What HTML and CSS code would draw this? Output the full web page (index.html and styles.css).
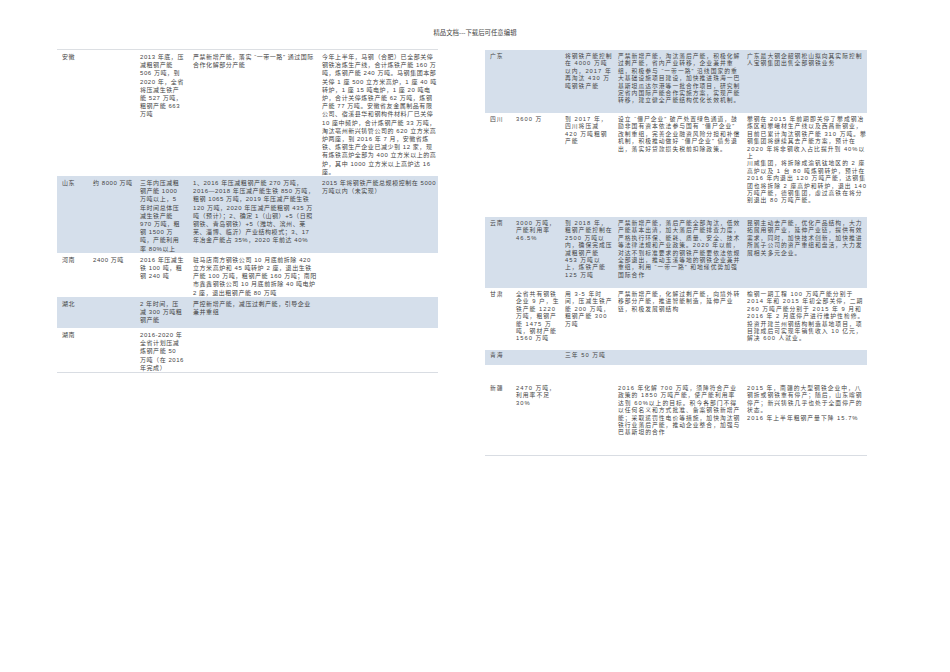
FILE: index.html
```html
<!DOCTYPE html>
<html lang="zh">
<head>
<meta charset="utf-8">
<link rel="stylesheet" href="styles.css">
</head>
<body>
<div class="page">
  <div class="header">精品文档---下载后可任意编辑</div>
  <div class="tables">
    <table class="t tl">
      <colgroup><col class="l1"><col class="l2"><col class="l3"><col class="l4"><col class="l5"></colgroup>
      <tr class="r-ah">
        <td>安徽</td>
        <td></td>
        <td class="narrow">2013 年底，压减粗钢产能 506 万吨，到 2020 年，全省将压减生铁产能 527 万吨，粗钢产能 663 万吨</td>
        <td>严禁新增产能，落实 “一带一路” 通过国际合作化解部分产能</td>
        <td>今年上半年，马钢（合肥）已全部关停钢铁冶炼生产线，合计炼铁产能 160 万吨，炼钢产能 240 万吨。马钢集团本部关停 1 座 500 立方米高炉，1 座 40 吨转炉，1 座 15 吨电炉，1 座 20 吨电炉，合计关停炼铁产能 62 万吨，炼钢产能 77 万吨。安徽省友金属制品有限公司、宿溪县华和钢构件材料厂已关停 10 座中频炉，合计炼钢产能 33 万吨，淘汰亳州新兴铸管公司的 620 立方米高炉两座，到 2016 年 7 月，安徽省炼铁、炼钢生产企业已减少到 12 家，现有炼铁高炉全部为 400 立方米以上的高炉，其中 1000 立方米以上高炉达 16 座。</td>
      </tr>
      <tr class="blue r-sd">
        <td>山东</td>
        <td>约 8000 万吨</td>
        <td class="narrow">三年内压减粗钢产能 1000 万吨以上，5 年时间总体压减生铁产能 970 万吨，粗钢 1500 万吨，产能利用率 80%以上</td>
        <td>1、2016 年压减粗钢产能 270 万吨，2016—2018 年压减产能生铁 850 万吨，粗钢 1065 万吨，2019 年压减产能生铁 120 万吨，2020 年压减产能粗钢 435 万吨（预计）；2、确定 1（山钢）+5（日照钢铁、青岛钢铁）+5（潍坊、滨州、莱芜、淄博、临沂）产业结构模式；3、17 年冶金产能占 35%，2020 年前达 40%</td>
        <td>2015 年将钢铁产能总规模控制在 5000 万吨以内（未实现）</td>
      </tr>
      <tr class="r-hn">
        <td>河南</td>
        <td>2400 万吨</td>
        <td class="narrow">2016 年压减生铁 100 吨，粗钢 240 吨</td>
        <td>驻马店南方钢铁公司 10 月底前拆除 420 立方米高炉和 45 吨转炉 2 座，退出生铁产能 100 万吨，粗钢产能 160 万吨；南阳市鑫鑫钢铁公司 10 月底前拆除 40 吨电炉 2 座，退出粗钢产能 80 万吨</td>
        <td></td>
      </tr>
      <tr class="blue r-hb">
        <td>湖北</td>
        <td></td>
        <td class="narrow">2 年时间，压减 300 万吨粗钢产能</td>
        <td>严控新增产能，减压过剩产能，引导企业兼并重组</td>
        <td></td>
      </tr>
      <tr class="r-hun last">
        <td>湖南</td>
        <td></td>
        <td class="narrow">2016-2020 年全省计划压减炼钢产能 50 万吨（在 2016 年完成）</td>
        <td></td>
        <td></td>
      </tr>
    </table>

    <table class="t tr">
      <colgroup><col class="r1"><col class="r2"><col class="r3"><col class="r4"><col class="r5"></colgroup>
      <tr class="blue r-gd">
        <td>广东</td>
        <td></td>
        <td>将钢铁产能控制在 4000 万吨以内，2017 年再淘汰 430 万吨钢铁产能</td>
        <td>严禁新增产能，淘汰落后产能，积极化解过剩产能，省内产业转移，企业兼并重组，积极参与 “一带一路” 沿线国家的重大基础设施项目建设，加快推进珠海一巴基斯坦瓜达尔港等一批合作项目，研究制定省内国际产能合作实施方案，实现产能转移，建立健全产能结构优化长效机制。</td>
        <td>广东最大钢企韶钢松山拟向其实际控制人宝钢集团出售全部钢铁业务</td>
      </tr>
      <tr class="r-sc">
        <td>四川</td>
        <td>3600 万</td>
        <td>到 2017 年，四川将压减 420 万吨粗钢产能</td>
        <td>设立 “僵尸企业” 破产处置绿色通道，鼓励非国有资本依法参与国有 “僵尸企业” 改制重组，完善企业融资风险分担和补偿机制，积极推动做好 “僵尸企业” 债务退出，落实好贷款损失税前扣除政策。</td>
        <td>攀钢在 2015 年前期即关停了攀成钢冶炼区和攀峨材生产线以及西昌新钢业，目前已累计淘汰钢铁产能 310 万吨。攀钢集团将继续其去产能方案，预计在 2020 年将非钢收入占比提升到 40%以上<br>川威集团，将拆除成渝钒钛地区的 2 座高炉以及 1 台 80 吨炼钢转炉，预计在 2016 年内退出 120 万吨产能，达钢集团也将拆除 2 座高炉和转炉，退出 140 万吨产能，德钢集团，虚过高铁在将分别退出 80 万吨产能。</td>
      </tr>
      <tr class="blue r-yn">
        <td>云南</td>
        <td>3000 万吨，产能利用率 46.5%</td>
        <td>到 2018 年，粗钢产能控制在 2500 万吨以内，确保完成压减粗钢产能 453 万吨以上，炼铁产能 125 万吨</td>
        <td>严禁新增产能，落后产能全部淘汰，低效产能基本出清，加大落后产能排查力度，严格执行环保、能耗、质量、安全、技术等法律法规和产业政策。2020 年以前，对达不到标准要求的钢铁产能要依法依规全部退出，推动玉溪等地的钢铁企业兼并重组，利用 “一带一路” 和地缘优势加强国际合作</td>
        <td>昆钢主动去产能，优化产品结构，大力拓展用钢产业，延伸产业链，提供有效需求，同时，加快技术创新，加快推进所属子公司的资产重组和盘活，大力发展相关多元企业。</td>
      </tr>
      <tr class="r-gs">
        <td>甘肃</td>
        <td>全省共有钢铁企业 9 户，生铁产能 1220 万吨，粗钢产能 1475 万吨，钢材产能 1560 万吨</td>
        <td>用 3-5 年时间，压减生铁产能 200 万吨，粗钢产能 300 万吨</td>
        <td>严禁新增产能，化解过剩产能，向境外转移部分产能，推进智能制造，延伸产业链，积极发展钢结构</td>
        <td>榆钢一期工程 100 万吨产能分别于 2014 年和 2015 年初全部关停，二期 260 万吨产能分别于 2015 年 9 月和 2016 年 2 月底停产进行维护性检修。<br>投资开建兰州钢结构制造基地项目，项目建成后可实现年销售收入 10 亿元，解决 600 人就业。</td>
      </tr>
      <tr class="blue r-qh">
        <td>青海</td>
        <td></td>
        <td>三年 50 万吨</td>
        <td></td>
        <td></td>
      </tr>
      <tr class="r-xj last">
        <td>新疆</td>
        <td>2470 万吨，利用率不足 30%</td>
        <td></td>
        <td>2016 年化解 700 万吨，须降符合产业政策的 1850 万吨产能，使产能利用率达到 60%以上的目标。积今各部门不得以任何名义和方式批准、备案钢铁新增产能；采取惩罚性电价等措施，加快淘汰钢铁行业落后产能，推动企业整合，加强与巴基斯坦的合作</td>
        <td>2015 年，南疆的大型钢铁企业中，八钢拆或钢铁重有停产；随后，山东喀钢停产；新兴铸铁几乎也处于全面停产的状态。<br>2016 年上半年粗钢产量下降 15.7%</td>
      </tr>
    </table>
  </div>
</div>
</body>
</html>
```
FILE: styles.css
```css
html, body {
  margin: 0;
  padding: 0;
  background: #ffffff;
}
.page {
  width: 950px;
  height: 672px;
  padding-top: 29px;
  box-sizing: border-box;
  font-family: "Liberation Sans", "Noto Sans CJK SC", sans-serif;
  color: #444;
}
.header {
  text-align: center;
  font-family: "Liberation Serif", "Noto Sans CJK SC", serif;
  font-size: 6.4px;
  line-height: 8px;
  color: #444;
}
.tables {
  display: flex;
  align-items: flex-start;
  gap: 47px;
  padding-left: 57px;
  margin-top: 12px;
}
.t {
  border-collapse: collapse;
  table-layout: fixed;
}
.t td {
  vertical-align: top;
  padding: 3px 0 0 5px;
  line-break: normal;
  overflow-wrap: anywhere;
}
.tl {
  width: 381px;
  font-size: 6px;
  line-height: 8.2px;
  letter-spacing: 0.55px;
  border-top: 1px solid #dcdfe3;
}
.tl td.narrow {
  padding-right: 4px;
}
.tr {
  width: 382px;
  font-size: 5.8px;
  line-height: 7.4px;
  letter-spacing: 1px;
  margin-top: 1px;
}
.l1 { width: 31px; }
.l2 { width: 47px; }
.l3 { width: 53px; }
.l4 { width: 129px; }
.l5 { width: 121px; }
.r1 { width: 26px; }
.r2 { width: 49px; }
.r3 { width: 53px; }
.r4 { width: 129px; }
.r5 { width: 125px; }
.blue td {
  background: #d5dfeb;
}
.last td {
  border-bottom: 1px solid #d9dde3;
}
.r-ah { height: 126px; }
.r-sd { height: 70px; }
.r-hn { height: 43px; }
.r-hb { height: 31px; }
.r-hun { height: 43px; }
.r-gd { height: 63px; }
.r-sc { height: 104px; }
.r-yn { height: 71px; }
.r-gs { height: 62px; }
.r-qh { height: 15px; }
.r-qh td { padding-top: 2px; }
.r-xj td { padding-top: 20px; height: 70px; }
```
